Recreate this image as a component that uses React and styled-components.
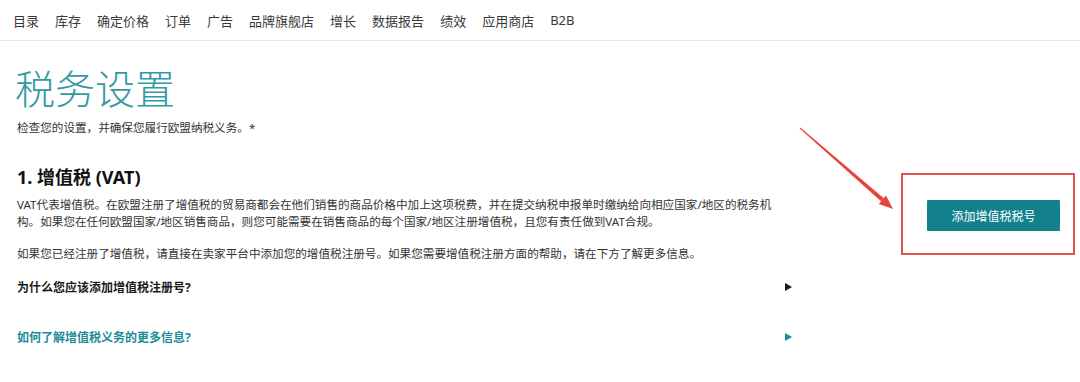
import styled, { createGlobalStyle } from 'styled-components';

const GlobalStyle = createGlobalStyle`
  body {
    margin: 0;
    background: #fff;
    font-family: "Noto Sans", "Noto Sans CJK SC", sans-serif;
    color: #222;
  }
`;

// Layout
const Page = styled.div`
  position: relative;
  width: 1080px;
  height: 382px;
  overflow: hidden;
`;

const Nav = styled.nav`
  display: flex;
  align-items: center;
  gap: 16px;
  height: 40px;
  padding-left: 13px;
  border-bottom: 1px solid #e8e8e8;
`;

const NavItem = styled.span`
  font-size: 13px;
  color: #3a3a3a;
  white-space: nowrap;
`;

const Main = styled.main`
  padding: 24px 5px 0 17px;
`;

const Title = styled.h1`
  margin: 0 0 0 -2px;
  font-size: 40px;
  line-height: 48px;
  font-weight: 300;
  color: #3399a5;
`;

const Subtitle = styled.p`
  margin: 6px 0 0;
  font-size: 11.6px;
  line-height: 17px;
  color: #333;
`;

const SectionRow = styled.div`
  display: flex;
  align-items: flex-start;
  margin-top: 29px;
`;

const LeftCol = styled.section`
  width: 778px;
`;

const Heading = styled.h2`
  margin: 0;
  font-size: 18px;
  line-height: 24px;
  font-weight: 700;
  color: #111;
`;

const Para = styled.p`
  margin: ${p => p.$gap}px 0 0;
  max-width: 770px;
  font-size: 11.6px;
  line-height: 17px;
  color: #333;
`;

const Accordion = styled.div`
  display: flex;
  align-items: center;
  justify-content: space-between;
  height: 50px;
  padding-right: 3px;
  color: ${p => (p.$link ? '#1b8b98' : '#1a1a1a')};
`;

const AccordionLabel = styled.span`
  font-size: 12px;
  font-weight: 700;
`;

const Caret = styled.span`
  width: 0;
  height: 0;
  border-left: 7px solid currentColor;
  border-top: 4px solid transparent;
  border-bottom: 4px solid transparent;
`;

// Annotation
const Highlight = styled.div`
  margin: 8px 0 0 auto;
  padding: 25px 13px 22px 24px;
  border: 2px solid #e05250;
`;

const AddButton = styled.button`
  display: block;
  width: 133px;
  height: 31px;
  border: none;
  border-radius: 1px;
  background: #13808e;
  color: #fff;
  font-family: inherit;
  font-size: 12px;
  cursor: pointer;
`;

const Arrow = styled.svg`
  position: absolute;
  left: 790px;
  top: 118px;
  overflow: visible;
`;

const navItems = ['目录', '库存', '确定价格', '订单', '广告', '品牌旗舰店', '增长', '数据报告', '绩效', '应用商店', 'B2B'];

export default function App() {
  return (
    <Page>
      <GlobalStyle />
      <Nav>
        {navItems.map(item => (
          <NavItem key={item}>{item}</NavItem>
        ))}
      </Nav>
      <Main>
        <Title>税务设置</Title>
        <Subtitle>检查您的设置，并确保您履行欧盟纳税义务。*</Subtitle>
        <SectionRow>
          <LeftCol>
            <Heading>1. 增值税 (VAT)</Heading>
            <Para $gap={7}>
              VAT代表增值税。在欧盟注册了增值税的贸易商都会在他们销售的商品价格中加上这项税费，并在提交纳税申报单时缴纳给向相应国家/地区的税务机构。如果您在任何欧盟国家/地区销售商品，则您可能需要在销售商品的每个国家/地区注册增值税，且您有责任做到VAT合规。
            </Para>
            <Para $gap={15}>
              如果您已经注册了增值税，请直接在卖家平台中添加您的增值税注册号。如果您需要增值税注册方面的帮助，请在下方了解更多信息。
            </Para>
            <Accordion>
              <AccordionLabel>为什么您应该添加增值税注册号?</AccordionLabel>
              <Caret />
            </Accordion>
            <Accordion $link>
              <AccordionLabel>如何了解增值税义务的更多信息?</AccordionLabel>
              <Caret />
            </Accordion>
          </LeftCol>
          <Highlight>
            <AddButton>添加增值税税号</AddButton>
          </Highlight>
        </SectionRow>
      </Main>
      <Arrow width="110" height="100" viewBox="0 0 110 100">
        <polygon points="9.7,10.4 10.3,9.6 93.8,80.3 91,83.3" fill="#e8433b" />
        <polygon points="103,91 88.8,85.9 96,77.6" fill="#e8433b" />
      </Arrow>
    </Page>
  );
}
